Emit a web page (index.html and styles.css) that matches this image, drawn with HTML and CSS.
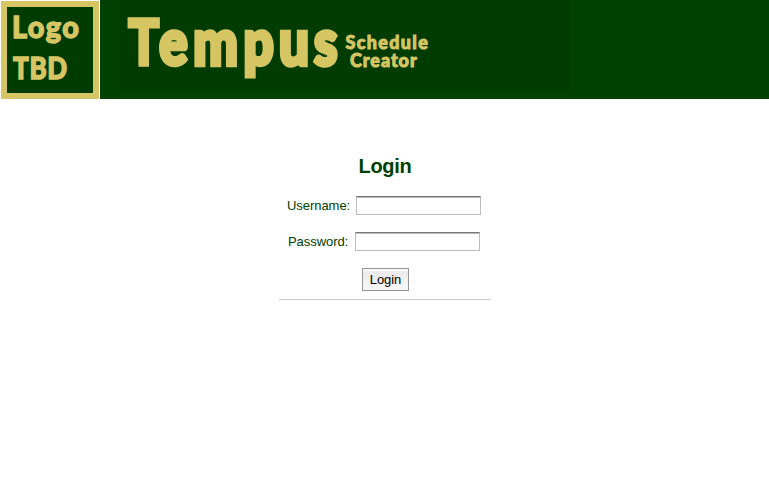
FILE: index.html
```
<!DOCTYPE html>
<html lang="en">
<head>
<meta charset="utf-8">
<title>Tempus Schedule Creator</title>
<link rel="stylesheet" href="styles.css">
</head>
<body>
<header class="banner">
  <svg class="logo" width="100" height="99" viewBox="0 0 100 99">
    <rect class="logo-frame" x="4" y="4" width="92" height="92"/>
    <text class="lettering small" transform="translate(12 37.8) scale(.93 1)" font-size="31" textLength="72" lengthAdjust="spacing">Logo</text>
    <text class="lettering small" transform="translate(13 79.3) scale(.84 1)" font-size="31" textLength="64.5" lengthAdjust="spacing">TBD</text>
  </svg>
  <svg class="title" width="669" height="99" viewBox="100 0 669 99">
    <rect class="title-panel" x="120" y="0" width="450" height="90"/>
    <text class="lettering large" transform="translate(129 65) scale(.82 1)" font-size="64.5" x="-1 36.8 78.5 139.5 183 225.7"><tspan class="initial">T</tspan>empus</text>
    <text class="lettering tiny" transform="translate(345.5 49.2) scale(.92 1)" font-size="19.5" textLength="89.5" lengthAdjust="spacing">Schedule</text>
    <text class="lettering tiny" transform="translate(350 66.8) scale(.92 1)" font-size="19.5" textLength="72.5" lengthAdjust="spacing">Creator</text>
  </svg>
</header>
<main class="login">
  <h1>Login</h1>
  <form>
    <div class="field"><label for="user">Username:</label><input id="user" type="text"></div>
    <div class="field password"><label for="pass">Password:</label><input id="pass" type="password"></div>
    <button type="button">Login</button>
  </form>
</main>
</body>
</html>
```
FILE: styles.css
```
body {
  margin: 0;
  background: #fff;
  color: #004000;
  font: 13px/15px "Liberation Sans", Arial, sans-serif;
}
.banner {
  display: flex;
  height: 99px;
}
.logo { background: #fff; }
.title { background: #004000; }
.logo-frame {
  fill: #003c00;
  stroke: #d6c563;
  stroke-width: 6;
}
.title-panel { fill: #003b00; }
.lettering {
  font-family: Lato, sans-serif;
  font-weight: 900;
  fill: #d6c563;
  stroke: #d6c563;
}
.large { stroke-width: 4.5; }
.initial { font-size: 62.5px; stroke-width: 3.5; }
.small { stroke-width: 1.4; }
.tiny { stroke-width: 1; }
.login {
  width: 212px;
  margin: 55px 0 0 279px;
  border-bottom: 1px solid #c9cbc9;
}
h1 {
  margin: 0;
  font-size: 20px;
  line-height: 24px;
  text-align: center;
  letter-spacing: -0.3px;
}
form {
  display: flex;
  flex-direction: column;
  padding: 18px 0 8px;
}
.field {
  display: flex;
  height: 19px;
  margin: 0 0 17px 8px;
  align-items: center;
}
.password { margin-left: 9px; }
label { width: 69px; letter-spacing: -0.05px; }
.password label { width: 67px; }
input {
  box-sizing: border-box;
  width: 125px;
  height: 19px;
  padding: 1px 3px;
  border: 1px solid #bbb;
  border-top-color: #777;
  border-radius: 0;
  background: #fff;
  box-shadow: inset 0 1px #bababa;
  font: inherit;
  outline: 0;
}
button {
  width: 47px;
  height: 23px;
  margin-left: 83px;
  padding: 0;
  border: 1px solid #949494;
  border-radius: 0;
  background: linear-gradient(#f8f8f8 0 2px, #ebebeb 3px, #f8f8f8);
  color: #000;
  font: inherit;
  letter-spacing: -0.1px;
}
```
